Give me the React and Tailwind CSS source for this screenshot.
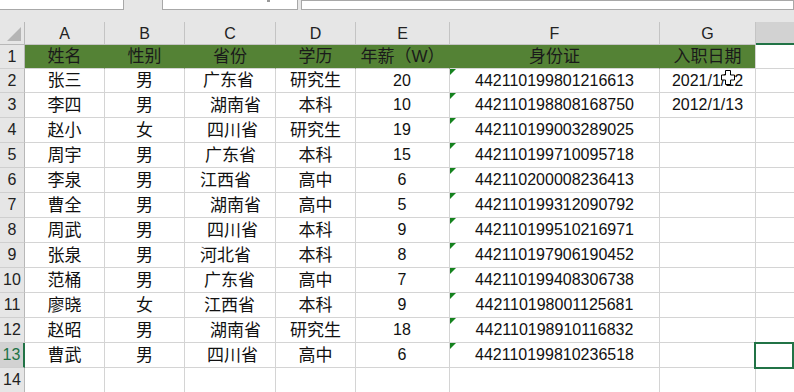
import React from "react";

const rows = [
  ["张三", "男", "广东省", "研究生", "20", "442110199801216613", "2021/1/12", "pl-[18px]"],
  ["李四", "男", "湖南省", "本科", "10", "442110198808168750", "2012/1/13", "pl-[25px]"],
  ["赵小", "女", "四川省", "研究生", "19", "442110199003289025", "", "pl-[22px]"],
  ["周宇", "男", "广东省", "本科", "15", "442110199710095718", "", "pl-[20px]"],
  ["李泉", "男", "江西省", "高中", "6", "442110200008236413", "", "pl-[15px]"],
  ["曹全", "男", "湖南省", "高中", "5", "442110199312090792", "", "pl-[25px]"],
  ["周武", "男", "四川省", "本科", "9", "442110199510216971", "", "pl-[22px]"],
  ["张泉", "男", "河北省", "本科", "8", "442110197906190452", "", "pl-[15px]"],
  ["范桶", "男", "广东省", "高中", "7", "442110199408306738", "", "pl-[19px]"],
  ["廖晓", "女", "江西省", "本科", "9", "442110198001125681", "", "pl-[19px]"],
  ["赵昭", "男", "湖南省", "研究生", "18", "442110198910116832", "", "pl-[25px]"],
  ["曹武", "男", "四川省", "高中", "6", "442110199810236518", "", "pl-[22px]"],
];

const headers = ["姓名", "性别", "省份", "学历", "年薪（W）", "身份证", "入职日期"];
const letters = ["A", "B", "C", "D", "E", "F", "G"];
const widths = ["w-[80px]", "w-[80px]", "w-[91px]", "w-[80px]", "w-[94px]", "w-[210px]", "w-[96px]"];

const cell = "flex items-center justify-center border-r border-b border-[#d4d4d4] bg-white shrink-0";
const zh = "text-[17px]";

function RowHeader({ n, h, selected }) {
  return (
    <div
      className={
        "flex items-center justify-center w-[25px] shrink-0 border-b border-[#cfcfcf] text-[16px] " +
        h +
        (selected
          ? " bg-[#d2d2d2] text-[#217346] border-r-2 border-r-[#217346]"
          : " bg-[#e6e6e6] text-[#222] border-r border-r-[#b8b8b8]")
      }
    >
      {n}
    </div>
  );
}

export default function App() {
  return (
    <div
      className="relative w-[794px] h-[392px] overflow-hidden bg-[#e6e6e6] text-[#111] leading-none"
      style={{ fontFamily: '"Liberation Sans", "Noto Sans CJK SC", sans-serif' }}
    >
      {/* top strip */}
      <div className="flex h-[22px] items-start">
        <div className="w-[124px] h-[10px] bg-white border-r border-b border-[#a8a8a8]" />
        <div className="w-[38px]" />
        <div className="relative w-[136px] h-[10px] bg-white border-l border-r border-b border-[#a8a8a8]">
          <div className="absolute left-[104px] top-0 w-[3px] h-[2px] bg-[#9a9a9a]" />
        </div>
        <div className="w-[3px]" />
        <div className="flex-1 h-[10px] bg-white border border-[#a8a8a8]" />
      </div>

      {/* column header row */}
      <div className="flex h-[23px]">
        <div className="relative w-[25px] shrink-0 border-r border-b border-[#b8b8b8]">
          <svg className="absolute left-0 top-0" width="25" height="23">
            <polygon points="7,19 21,5 21,19" fill="#b5b5b5" />
          </svg>
        </div>
        {letters.map((l, i) => (
          <div
            key={l}
            className={
              "flex items-center justify-center shrink-0 border-r border-b border-[#c4c4c4] text-[16px] text-[#222] pt-[2px] " +
              widths[i]
            }
          >
            {l}
          </div>
        ))}
        <div className="flex-1 bg-[#d2d2d2] border-b-2 border-[#217346]" />
      </div>

      {/* row 1 */}
      <div className="flex h-[24px]">
        <RowHeader n="1" h="h-[24px]" />
        {headers.map((t, i) => (
          <div
            key={t}
            className={
              "flex items-center justify-center shrink-0 bg-[#548235] border-b border-[#d4d4d4] text-[#1a1a1a] " +
              zh +
              " " +
              widths[i] +
              (i === 6 ? " border-r border-r-[#d4d4d4]" : " border-r border-r-[#548235]")
            }
          >
            {t}
          </div>
        ))}
        <div className="flex-1 bg-white border-b border-[#d4d4d4]" />
      </div>

      {/* data rows */}
      {rows.map((r, idx) => {
        const h = idx === 0 ? "h-[24px]" : "h-[25px]";
        const n = idx + 2;
        return (
          <div key={n} className={"flex " + h}>
            <RowHeader n={String(n)} h={h} selected={n === 13} />
            <div className={cell + " " + zh + " " + widths[0]}>{r[0]}</div>
            <div className={cell + " " + zh + " " + widths[1]}>{r[1]}</div>
            <div className={cell + " " + zh + " " + widths[2] + " !justify-start " + r[7]}>{r[2]}</div>
            <div className={cell + " " + zh + " " + widths[3]}>{r[3]}</div>
            <div className={cell + " text-[16px] pr-[1px] " + widths[4]}>{r[4]}</div>
            <div className={cell + " relative text-[16px] " + widths[5]}>
              <svg className="absolute left-0 top-0" width="7" height="7">
                <polygon points="0,0 6,0 0,6" fill="#14821e" />
              </svg>
              {r[5]}
            </div>
            <div className={cell + " text-[16px] " + widths[6]}>{r[6]}</div>
            <div className="flex-1 bg-white border-b border-[#d4d4d4]" />
          </div>
        );
      })}

      {/* row 14 */}
      <div className="flex h-[25px]">
        <RowHeader n="14" h="h-[25px]" />
        {widths.map((w, i) => (
          <div key={i} className={cell + " " + w} />
        ))}
        <div className="flex-1 bg-white border-b border-[#d4d4d4]" />
      </div>

      {/* selection box H13 */}
      <div className="absolute left-[754px] top-[342px] w-[40px] h-[27px] border-2 border-[#217346]" />

      {/* cursor */}
      <svg className="absolute left-[721px] top-[70px]" width="14" height="15" viewBox="0 0 14 15">
        <polygon
          points="4.5,0.5 9.5,0.5 9.5,5 13.5,5 13.5,10 9.5,10 9.5,14.5 4.5,14.5 4.5,10 0.5,10 0.5,5 4.5,5"
          fill="#fff"
          stroke="#000"
          strokeWidth="1"
        />
      </svg>
    </div>
  );
}
